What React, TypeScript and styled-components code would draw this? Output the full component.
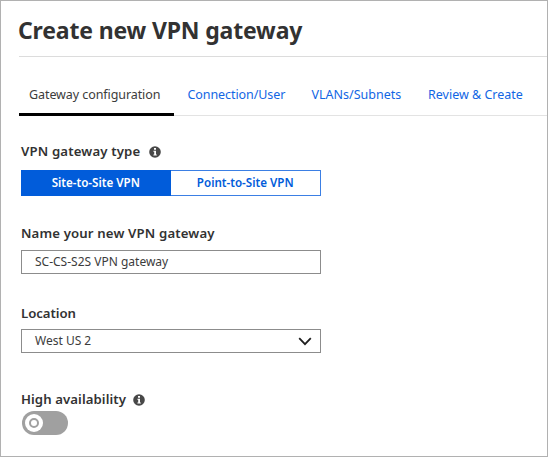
import React from "react";
import styled, { createGlobalStyle } from "styled-components";

const GlobalStyle = createGlobalStyle`
  *, *::before, *::after { box-sizing: border-box; }
  body { margin: 0; background: #fff; }
  button, input { font: inherit; letter-spacing: inherit; }
`;

const Panel = styled.main`
  width: 548px;
  height: 457px;
  border: 1px solid #b1b1b1;
  background: #fff;
  color: #323232;
  font-family: "Noto Sans", "Open Sans", sans-serif;
  overflow: hidden;
`;

const Header = styled.header`
  height: 56px;
  margin-left: 18px;
  border-bottom: 1px solid #dcdcdc;
`;

const Title = styled.h1`
  margin: 0 0 0 -1px;
  padding-top: 13px;
  font-size: 23px;
  font-weight: 700;
  line-height: 32px;
  letter-spacing: -0.16px;
  white-space: nowrap;
`;

const TabBar = styled.nav`
  display: flex;
  height: 41px;
  margin: 18px 0 0 18px;
  box-shadow: inset 0 -1px #e3e3e3;
`;

const Tab = styled.button<{ $active?: boolean; $width: number; $spacing?: number }>`
  flex: none;
  width: ${(p) => p.$width}px;
  height: 41px;
  padding: 2px 0 0 ${(p) => (p.$active ? 10 : 14)}px;
  border: 0;
  border-bottom: 3px solid ${(p) => (p.$active ? "#000" : "transparent")};
  background: none;
  color: ${(p) => (p.$active ? "#3c3c3c" : "#1266e4")};
  font-size: 12.5px;
  line-height: 36px;
  letter-spacing: ${(p) => p.$spacing ?? 0}px;
  text-align: left;
  white-space: nowrap;
`;

const Form = styled.form`
  display: flex;
  flex-direction: column;
  width: 300px;
  margin: 25px 0 0 20px;
`;

const Field = styled.div<{ $height: number }>`
  height: ${(p) => p.$height}px;
`;

const Label = styled.label<{ $spacing?: number }>`
  display: flex;
  align-items: center;
  height: 20px;
  font-size: 13.2px;
  font-weight: 600;
  line-height: 20px;
  letter-spacing: ${(p) => p.$spacing ?? 0}px;
  white-space: nowrap;
`;

const InfoSvg = styled.svg<{ $gap: number }>`
  flex: none;
  margin: 2px 0 0 ${(p) => p.$gap}px;
`;

const Segments = styled.div`
  display: flex;
  height: 26px;
  margin-top: 9px;
  border: 1px solid #3b7fe4;
`;

const Segment = styled.button<{ $selected?: boolean }>`
  flex: 1;
  margin: ${(p) => (p.$selected ? "-1px 0 -1px -1px" : "0")};
  padding: 0;
  border: 0;
  background: ${(p) => (p.$selected ? "#015cda" : "#fff")};
  color: ${(p) => (p.$selected ? "#fff" : "#015cda")};
  font-size: 11.6px;
  font-weight: 600;
  line-height: 24px;
`;

const Control = styled.div<{ $gap?: number }>`
  display: flex;
  align-items: center;
  justify-content: space-between;
  height: 24px;
  margin-top: ${(p) => p.$gap ?? 7}px;
  padding: 0 8px 0 13px;
  border: 1px solid #8c8c8c;
  color: #3c3c3c;
  font-size: 12px;
  line-height: 22px;
`;

const Switch = styled.button`
  display: flex;
  align-items: center;
  width: 46px;
  height: 24px;
  margin: 2px 0 0 1px;
  padding: 0 3px;
  border: 0;
  border-radius: 12px;
  background: #a0a0a0;
`;

const Knob = styled.span`
  display: grid;
  place-items: center;
  width: 18px;
  height: 18px;
  border-radius: 50%;
  background: #fff;

  &::after {
    content: "";
    width: 10px;
    height: 10px;
    border: 2px solid #a0a0a0;
    border-radius: 50%;
  }
`;

const InfoIcon = ({ gap }: { gap: number }) => (
  <InfoSvg $gap={gap} width="12" height="12" viewBox="0 0 12 12" aria-hidden="true">
    <circle cx="6" cy="6" r="5.8" fill="#484848" />
    <path d="M5 2h2v1.7H5zM4.4 4.8H7v3.8h.8v1H4.4v-1h.8V5.8h-.8z" fill="#fff" />
  </InfoSvg>
);

const Chevron = () => (
  <svg width="14" height="9" viewBox="0 0 14 9" fill="none" aria-hidden="true">
    <path d="M1.2 1.2 7 7.1l5.8-5.9" stroke="#1e1e1e" strokeWidth="1.8" />
  </svg>
);

export default function App() {
  return (
    <>
      <GlobalStyle />
      <Panel>
        <Header>
          <Title>Create new VPN gateway</Title>
        </Header>
        <TabBar>
          <Tab $active $width={154.5} $spacing={-0.08}>Gateway configuration</Tab>
          <Tab $width={124} $spacing={-0.08}>Connection/User</Tab>
          <Tab $width={116.5}>VLANs/Subnets</Tab>
          <Tab $width={133}>Review &amp; Create</Tab>
        </TabBar>
        <Form>
          <Field $height={82}>
            <Label $spacing={0.15}>VPN gateway type<InfoIcon gap={9} /></Label>
            <Segments>
              <Segment type="button" $selected>Site-to-Site VPN</Segment>
              <Segment type="button">Point-to-Site VPN</Segment>
            </Segments>
          </Field>
          <Field $height={80}>
            <Label $spacing={0.14}>Name your new VPN gateway</Label>
            <Control>SC-CS-S2S VPN gateway</Control>
          </Field>
          <Field $height={86}>
            <Label $spacing={-0.05}>Location</Label>
            <Control $gap={6}>West US 2<Chevron /></Control>
          </Field>
          <Field $height={46}>
            <Label $spacing={0.08}>High availability<InfoIcon gap={7} /></Label>
            <Switch type="button" role="switch" aria-checked="false" aria-label="High availability">
              <Knob />
            </Switch>
          </Field>
        </Form>
      </Panel>
    </>
  );
}
